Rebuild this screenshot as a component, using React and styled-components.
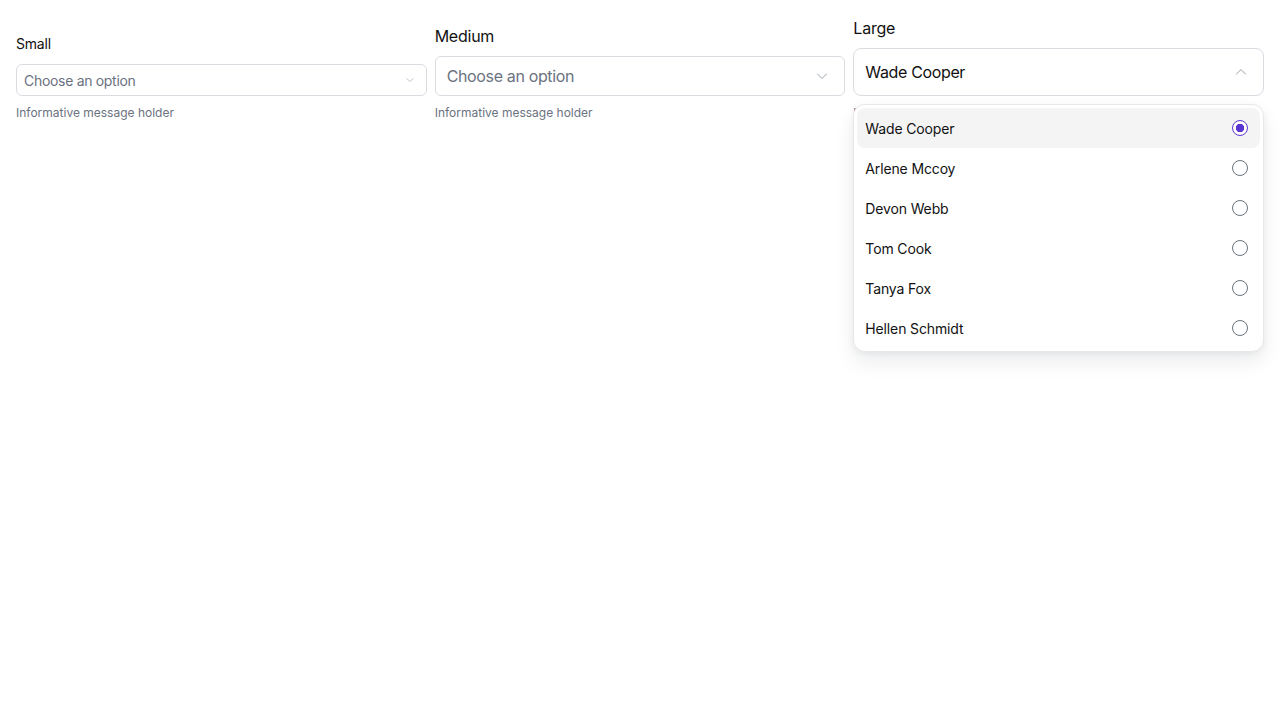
import React, {useState} from 'react';
import styled, {createGlobalStyle} from 'styled-components';

const Global = createGlobalStyle`
  body {
    margin: 0;
    background: #ffffff;
    font-family: Inter, "Noto Sans", sans-serif;
    color: #111827;
  }
`

const sizes = {
  sm: {label: 14, height: 32, text: 14, pad: 8, chevron: 8, radius: 6},
  md: {label: 16, height: 40, text: 16, pad: 12, chevron: 12, radius: 6},
  lg: {label: 16, height: 48, text: 16, pad: 12, chevron: 12, radius: 8},
};

const people = ['Wade Cooper', 'Arlene Mccoy', 'Devon Webb', 'Tom Cook', 'Tanya Fox', 'Hellen Schmidt'];

const Chevron = ({size, up}) => (
  <svg width={size} height={size} viewBox="0 0 12 12" fill="none">
    <path
      d={up ? 'M1.5 8L6 3.5L10.5 8' : 'M1.5 4L6 8.5L10.5 4'}
      stroke="#9ca3af"
      strokeWidth="1"
      strokeLinecap="round"
      strokeLinejoin="round"
    />
  </svg>
);

const SelectField = ({size, label, value, open, options}) => {
  const s = sizes[size];
  const [selected, setSelected] = useState(value);

  return (
    <Field>
      <Label $size={s.label}>{label}</Label>
      <Trigger $s={s}>
        <Value $size={s.text} $empty={!selected}>{selected || 'Choose an option'}</Value>
        <Chevron size={s.chevron} up={open} />
      </Trigger>
      <Helper>Informative message holder</Helper>
      {open && (
        <Menu>
          {options.map(name => (
            <Option key={name} $active={name === selected} onClick={() => setSelected(name)}>
              {name}
              <Radio $checked={name === selected} />
            </Option>
          ))}
        </Menu>
      )}
    </Field>
  );
};

const App = () => (
  <Page>
    <Global />
    <Row>
      <SelectField size="sm" label="Small" />
      <SelectField size="md" label="Medium" />
      <SelectField size="lg" label="Large" value="Wade Cooper" open options={people} />
    </Row>
  </Page>
);

const Page = styled.div`
  min-height: 720px;
`

const Row = styled.div`
  display: grid;
  grid-template-columns: repeat(3, 1fr);
  column-gap: 8px;
  align-items: end;
  padding: 16px 16px 0;
`

const Field = styled.div`
  position: relative;
  display: flex;
  flex-direction: column;
`

const Label = styled.div`
  font-size: ${p => p.$size}px;
  line-height: 24px;
  letter-spacing: -0.015em;
  color: #111111;
  margin-bottom: 8px;
`

const Trigger = styled.div`
  display: flex;
  align-items: center;
  justify-content: space-between;
  box-sizing: border-box;
  height: ${p => p.$s.height}px;
  padding: 0 ${p => p.$s.pad + 4}px 0 ${p => p.$s.pad - 1}px;
  border: 1px solid #d9dce1;
  border-radius: ${p => p.$s.radius}px;
  background: #ffffff;
`

const Value = styled.span`
  font-size: ${p => p.$size}px;
  letter-spacing: -0.022em;
  color: ${p => p.$empty ? '#6b7280' : '#111111'};
`

const Helper = styled.div`
  margin-top: 9px;
  font-size: 12px;
  line-height: 16px;
  color: #6b7280;
`

const Menu = styled.div`
  position: absolute;
  top: calc(100% - 17px);
  left: 0;
  right: 0;
  box-sizing: border-box;
  padding: 3px;
  background: #ffffff;
  border: 1px solid #e7e8ec;
  border-radius: 12px;
  box-shadow: 0 10px 20px rgba(17, 24, 39, 0.08), 0 2px 6px rgba(17, 24, 39, 0.05);
`

const Option = styled.div`
  display: flex;
  align-items: center;
  justify-content: space-between;
  height: 40px;
  padding: 0 12px 0 8px;
  border-radius: 8px;
  font-size: 14px;
  letter-spacing: -0.01em;
  color: #111111;
  background: ${p => p.$active ? '#f4f4f5' : 'transparent'};
  cursor: pointer;
`

const Radio = styled.span`
  box-sizing: border-box;
  width: 16px;
  height: 16px;
  border-radius: 50%;
  border: 1px solid ${p => p.$checked ? '#5b34d6' : '#6b7280'};
  background: ${p => p.$checked ? 'radial-gradient(circle, #5b34d6 0 4px, #ffffff 4.5px)' : '#ffffff'};
`

export default App;
